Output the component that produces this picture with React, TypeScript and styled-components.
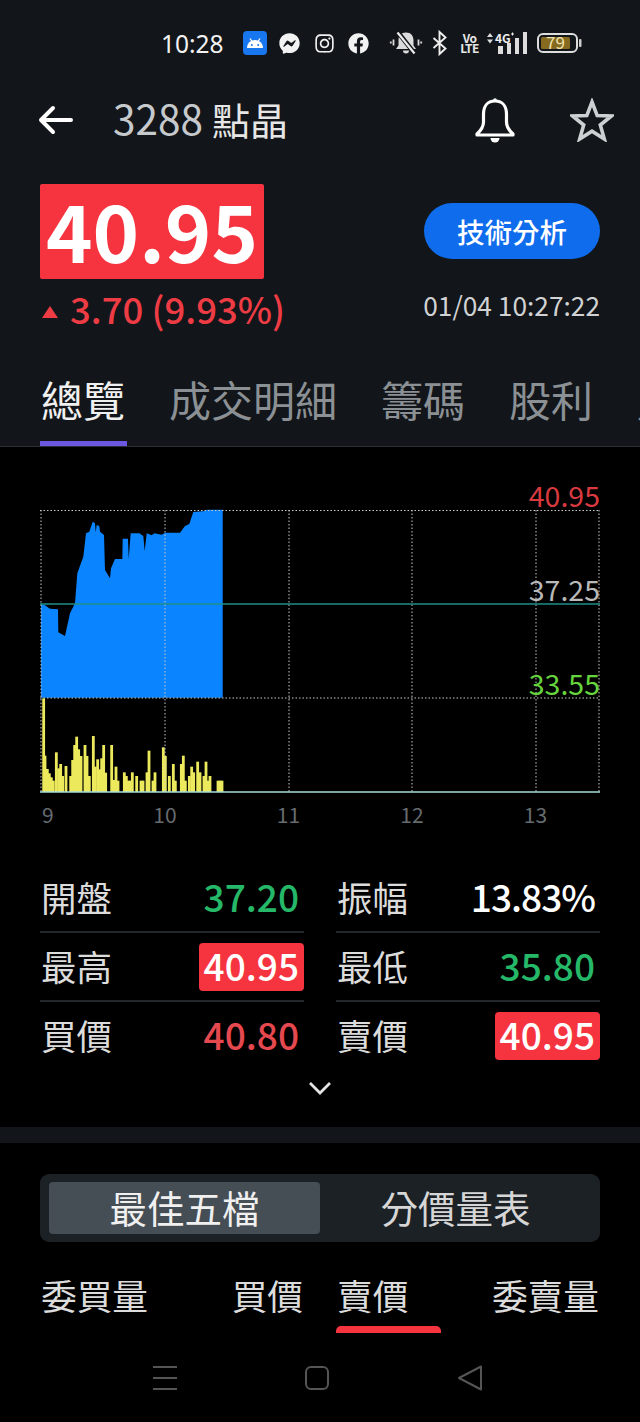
import React from 'react';
import styled, { createGlobalStyle } from 'styled-components';
import { FaFacebook, FaFacebookMessenger, FaInstagram } from 'react-icons/fa';

const FONT = `"Noto Sans CJK TC", "Noto Sans", sans-serif`;

const GlobalStyle = createGlobalStyle`
  html, body {
    margin: 0;
    padding: 0;
    background: #000;
    font-family: ${FONT};
  }
`;

const bluePoints: [number, number][] = [
  [33, 313], [45, 316], [60, 326], [84, 328], [85, 397], [105, 408], [120, 340], [135, 310],
  [142, 220], [160, 170], [168, 100], [178, 95], [188, 65], [195, 70], [197, 97], [200, 75],
  [208, 78], [210, 95], [222, 105], [225, 210], [240, 235], [243, 205], [255, 177], [277, 177],
  [278, 116], [294, 116], [296, 176], [302, 100], [328, 100], [340, 108], [344, 153], [350, 100],
  [365, 106], [373, 100], [395, 104], [405, 98], [450, 98], [465, 78], [478, 72], [490, 36],
  [525, 33], [530, 29], [578, 29], [578, 593], [33, 593],
];

const volumeBars: [number, number][] = [
  [41, 25], [45, 197], [52, 237], [58, 250], [64, 262], [70, 272], [79, 187], [86, 235], [92, 222],
  [98, 258], [108, 228], [122, 258], [128, 210], [134, 165], [140, 140], [146, 178], [153, 198],
  [165, 165], [171, 198], [178, 258], [190, 138], [196, 230], [203, 208], [209, 238], [215, 205],
  [221, 165], [227, 248], [245, 165], [252, 270], [258, 230], [264, 272], [283, 247], [289, 258],
  [295, 272], [301, 272], [307, 247], [320, 258], [333, 272], [339, 272], [351, 247], [357, 182],
  [369, 272], [375, 247], [400, 172], [406, 198], [418, 258], [430, 222], [436, 272], [454, 222],
  [460, 197], [466, 272], [478, 258], [485, 230], [491, 247], [503, 215], [510, 247], [522, 258],
  [528, 215], [534, 272], [540, 258], [564, 272], [570, 272], [576, 272],
];

const toX = (z: number) => 30 + z / 3;
const bluePath = bluePoints.map(([x, y]) => `${toX(x).toFixed(1)},${(500 + y / 3).toFixed(1)}`).join(' ');

const AndroidIcon = () => (
  <svg width="24" height="24" viewBox="0 0 24 24">
    <rect width="24" height="24" rx="4" fill="#1877ee" />
    <path d="M4 17a8 8 0 0 1 16 0z" fill="#fff" />
    <path d="M7 7.500l2 3M17 7.500l-2 3" stroke="#fff" strokeWidth="1.300" />
    <circle cx="8.800" cy="14" r="1" fill="#1877ee" />
    <circle cx="15.200" cy="14" r="1" fill="#1877ee" />
  </svg>
);

const MuteIcon = () => (
  <svg width="32" height="24" viewBox="0 0 32 24">
    <path d="M16 1.500c-5 0-7.500 3.500-7.500 8v5L6 18h20l-2.500-3.500v-5c0-4.500-2.500-8-7.500-8z" fill="#dcdcdc" />
    <path d="M13 19.500a3 3 0 0 0 6 0z" fill="#dcdcdc" />
    <path d="M7 0l18 23" stroke="#121519" strokeWidth="4.500" />
    <path d="M7.500 1.500l17 21" stroke="#ececec" strokeWidth="2.200" />
    <path d="M3.500 8.500v6M0.800 10.500v2M28.500 8.500v6M31.200 10.500v2" stroke="#dcdcdc" strokeWidth="1.800" />
  </svg>
);

const BluetoothIcon = () => (
  <svg width="15" height="24" viewBox="0 0 15 24" fill="none" stroke="#eee" strokeWidth="1.900">
    <path d="M1.500 7l12 10.500L7.500 23V1l6 5.500L1.500 17" />
  </svg>
);

const SignalIcon = () => (
  <svg width="42" height="24" viewBox="0 0 42 24">
    <path d="M1 6l3-4 3 4zM1 8.500l3 4 3-4z" fill="#ddd" />
    <text x="9" y="12" fontSize="12" fontWeight="700" fill="#eee" fontFamily={FONT}>4G</text>
    <path d="M25 3h3M26.500 1.500v3" stroke="#eee" strokeWidth="1" />
    <rect x="12" y="15" width="5" height="8" fill="#ddd" />
    <rect x="21" y="12" width="4" height="11" fill="#ddd" />
    <rect x="29" y="7" width="4" height="16" fill="#ddd" />
    <rect x="37" y="1" width="4" height="22" fill="#ddd" />
  </svg>
);

const BatteryIcon = () => (
  <svg width="45" height="24" viewBox="0 0 45 24">
    <rect x="1" y="3" width="39" height="18" rx="5" fill="none" stroke="#ddd" strokeWidth="2" />
    <rect x="4" y="6" width="29" height="12" rx="1.500" fill="#856a1f" />
    <rect x="42" y="8" width="2.500" height="8" rx="1" fill="#ccc" />
    <text x="18.500" y="18" fontSize="17" textAnchor="middle" fill="#efe2b0" fontFamily={FONT}>79</text>
  </svg>
);

const BackIcon = () => (
  <svg width="36" height="30" viewBox="0 0 36 30" fill="none" stroke="#fff" strokeWidth="4" strokeLinecap="round" strokeLinejoin="round">
    <path d="M33 15H3M15 3L3 15l12 12" />
  </svg>
);

const BellIcon = () => (
  <svg width="42" height="46" viewBox="0 0 42 46" fill="none" stroke="#fff" strokeWidth="3.200" strokeLinejoin="round">
    <path d="M21 4c-8 0-11.500 6-11.500 13v8c0 5-2 8-6.500 12v1h36v-1c-4.500-4-6.500-7-6.500-12v-8C32.500 10 29 4 21 4z" />
    <circle cx="21" cy="3" r="1.800" fill="#fff" stroke="none" />
    <path d="M16.500 41a4.500 4.500 0 0 0 9 0z" fill="#fff" stroke="none" />
  </svg>
);

const StarIcon = () => (
  <svg width="44" height="44" viewBox="0 0 44 44" fill="none" stroke="#ccd0d3" strokeWidth="3.600" strokeLinejoin="miter">
    <path d="M22 4l5.200 13.600L41.500 18 30.300 27l4 14L22 33.200 9.700 41l4-14L2.500 18l14.300-.4z" />
  </svg>
);

const ChevronIcon = () => (
  <svg width="24" height="16" viewBox="0 0 24 16" fill="none" stroke="#e4e4e4" strokeWidth="2.800">
    <path d="M2 3l10 10L22 3" />
  </svg>
);

const MenuIcon = () => (
  <svg width="26" height="26" viewBox="0 0 26 26" stroke="#555" strokeWidth="2">
    <path d="M1 2h24M1 13h24M1 24h24" />
  </svg>
);

const HomeIcon = () => (
  <svg width="26" height="26" viewBox="0 0 26 26" fill="none" stroke="#555" strokeWidth="2">
    <rect x="2" y="2" width="22" height="22" rx="5" />
  </svg>
);

const BackNavIcon = () => (
  <svg width="26" height="26" viewBox="0 0 26 26" fill="none" stroke="#555" strokeWidth="2" strokeLinejoin="round">
    <path d="M24 1.500v23L2 13z" />
  </svg>
);

const Page = styled.div`
  width: 640px;
  height: 1422px;
  background: #000;
  overflow: hidden;
`;

const TopPanel = styled.header`
  background: #121519;
  height: 447px;
`;

const StatusBar = styled.div`
  height: 86px;
  padding-left: 161px;
  display: flex;
  align-items: center;
`;

const StatusTime = styled.span`
  font-size: 24.500px;
  color: #f2f2f2;
  font-family: "Noto Sans", sans-serif;
`;

const StatusSlot = styled.span<{ $ml: number }>`
  display: flex;
  align-items: center;
  margin-left: ${(p) => p.$ml}px;
  color: #f2f2f2;
  svg {
    overflow: visible;
  }
`;

const VoLte = styled.span`
  width: 16px;
  display: flex;
  flex-direction: column;
  align-items: center;
  font-size: 12px;
  line-height: 10px;
  font-weight: 700;
  color: #e6e6e6;
  letter-spacing: -0.500px;
`;

const TitleBar = styled.div`
  height: 68px;
  padding: 0 26px 0 38px;
  display: flex;
  align-items: center;
`;

const StockName = styled.h1`
  margin: 0 0 0 39px;
  padding-bottom: 4px;
  flex: 1;
  font-size: 40.500px;
  font-weight: 400;
  line-height: 64px;
  color: #c6cacd;
  white-space: nowrap;
`;

const NameCjk = styled.span`
  font-size: 38px;
  color: #e6e6e6;
`;

const TitleActions = styled.div`
  display: flex;
  align-items: center;
  gap: 54px;
`;

const QuoteRow = styled.section`
  margin-top: 30px;
  padding: 0 40px;
  display: flex;
  justify-content: space-between;
`;

const QuoteLeft = styled.div`
  display: flex;
  flex-direction: column;
  align-items: flex-start;
`;

const QuoteRight = styled.div`
  padding-top: 19px;
  display: flex;
  flex-direction: column;
  align-items: flex-end;
`;

const PriceBox = styled.div`
  width: 224px;
  height: 95px;
  padding-bottom: 5px;
  box-sizing: border-box;
  background: #f6343f;
  border-radius: 2px;
  display: flex;
  align-items: center;
  justify-content: center;
  font-size: 79px;
  font-weight: 700;
  color: #fff;
  line-height: 90px;
`;

const ChangeRow = styled.div`
  margin-top: 10px;
  height: 44px;
  padding-bottom: 6px;
  box-sizing: border-box;
  display: flex;
  align-items: center;
  color: #ee3c45;
  font-size: 36.500px;
  font-weight: 500;
  white-space: nowrap;
`;

const UpTriangle = styled.span`
  width: 0;
  height: 0;
  margin: 7px 12px 0 2px;
  border-left: 8px solid transparent;
  border-right: 8px solid transparent;
  border-bottom: 12px solid #ee3c45;
`;

const AnalysisButton = styled.button`
  width: 176px;
  height: 56px;
  border: 0;
  border-radius: 28px;
  background: #0f6cec;
  color: #fff;
  font-family: ${FONT};
  font-size: 27.500px;
  font-weight: 500;
  padding: 0;
`;

const Timestamp = styled.div`
  margin-top: 27px;
  height: 38px;
  line-height: 38px;
  font-size: 26.300px;
  color: #d0d2d4;
  white-space: nowrap;
`;

const TabBar = styled.nav`
  margin-top: 24px;
  height: 90px;
  box-sizing: border-box;
  border-bottom: 1px solid #2c2f33;
  padding-left: 39px;
  display: flex;
  gap: 40px;
  overflow: hidden;
`;

const Tab = styled.div<{ $active?: boolean }>`
  position: relative;
  flex: none;
  height: 90px;
  padding: 12px 2px 0;
  box-sizing: border-box;
  font-size: 42px;
  line-height: 60px;
  color: ${(p) => (p.$active ? '#f0f0f0' : '#8b9094')};
  &::after {
    content: '';
    display: ${(p) => (p.$active ? 'block' : 'none')};
    position: absolute;
    left: 1px;
    right: 0;
    bottom: 0;
    height: 6px;
    background: #6a58e0;
  }
`;

const ChartFrame = styled.section`
  position: relative;
  margin: 62px 40px 0;
  height: 285px;
  svg {
    display: block;
  }
`;

const ChartLabel = styled.span<{ $top: number; $color: string }>`
  position: absolute;
  right: 0;
  top: ${(p) => p.$top}px;
  font-size: 28.500px;
  line-height: 30px;
  color: ${(p) => p.$color};
`;

const AxisRow = styled.div`
  margin-left: 42px;
  height: 44px;
  padding-bottom: 4px;
  box-sizing: border-box;
  display: flex;
  gap: 63.500px;
  align-items: center;
`;

const AxisTick = styled.span<{ $first?: boolean }>`
  width: ${(p) => (p.$first ? 29.500 : 60)}px;
  text-align: ${(p) => (p.$first ? 'left' : 'center')};
  font-size: 21px;
  color: #666b6f;
`;

const StatsGrid = styled.section`
  margin-top: 26px;
  padding: 0 40px;
  display: grid;
  grid-template-columns: 264px 264px;
  column-gap: 32px;
`;

const StatRow = styled.div<{ $last?: boolean }>`
  height: 69px;
  box-sizing: border-box;
  display: flex;
  align-items: center;
  justify-content: space-between;
  border-bottom: 2px solid ${(p) => (p.$last ? 'transparent' : '#24272b')};
`;

const StatLabel = styled.span`
  padding: 0 0 3px 1px;
  font-size: 35.500px;
  color: #dcdcdc;
`;

const StatValue = styled.span<{ $color?: string; $flag?: boolean; $tight?: boolean }>`
  height: 48px;
  padding: 0 5px 3px;
  box-sizing: border-box;
  display: flex;
  align-items: center;
  border-radius: 4px;
  font-size: 37px;
  font-weight: 500;
  letter-spacing: ${(p) => (p.$tight ? '-1px' : '0')};
  color: ${(p) => p.$color || '#fff'};
  background: ${(p) => (p.$flag ? '#f6343f' : 'transparent')};
`;

const ExpandRow = styled.div`
  height: 56px;
  padding-top: 9px;
  box-sizing: border-box;
  display: flex;
  justify-content: center;
  align-items: flex-start;
`;

const Band = styled.div`
  height: 16px;
  background: #121519;
`;

const Segmented = styled.div`
  margin: 31px 40px 0;
  height: 68px;
  padding: 8px 9px;
  box-sizing: border-box;
  display: flex;
  background: #1c2126;
  border-radius: 9px;
`;

const Segment = styled.div<{ $active?: boolean }>`
  flex: 1;
  padding-bottom: 3px;
  display: flex;
  align-items: center;
  justify-content: center;
  border-radius: 4px;
  font-size: 37.500px;
  color: ${(p) => (p.$active ? '#f0f0f0' : '#d6d6d6')};
  background: ${(p) => (p.$active ? '#454e55' : 'transparent')};
`;

const DepthHeader = styled.div`
  margin-top: 26px;
  padding: 0 40px;
  display: grid;
  grid-template-columns: 264px 264px;
  column-gap: 32px;
`;

const DepthSide = styled.div`
  height: 58px;
  padding-bottom: 6px;
  box-sizing: border-box;
  display: flex;
  align-items: center;
  justify-content: space-between;
`;

const DepthLabel = styled.span`
  padding: 0 1px;
  font-size: 35.700px;
  color: #dcdcdc;
`;

const SellMarker = styled.div`
  grid-column: 2;
  width: 105px;
  height: 7px;
  background: #f6343f;
  border-radius: 5px 5px 0 0;
`;

const NavBar = styled.footer`
  margin-top: 32px;
  display: flex;
  justify-content: center;
  gap: 126.500px;
  padding-right: 6px;
  svg {
    display: block;
  }
`;

const App: React.FC = () => {
  const gridX = [41, 165, 289, 412, 536, 599];
  return (
    <Page>
      <GlobalStyle />
      <TopPanel>
        <StatusBar>
          <StatusTime>10:28</StatusTime>
          <StatusSlot $ml={19}><AndroidIcon /></StatusSlot>
          <StatusSlot $ml={12}><FaFacebookMessenger size={21} /></StatusSlot>
          <StatusSlot $ml={14}><FaInstagram size={21} /></StatusSlot>
          <StatusSlot $ml={13}><FaFacebook size={21} /></StatusSlot>
          <StatusSlot $ml={21}><MuteIcon /></StatusSlot>
          <StatusSlot $ml={10}><BluetoothIcon /></StatusSlot>
          <StatusSlot $ml={15}><VoLte><span>Vo</span><span>LTE</span></VoLte></StatusSlot>
          <StatusSlot $ml={8}><SignalIcon /></StatusSlot>
          <StatusSlot $ml={9}><BatteryIcon /></StatusSlot>
        </StatusBar>
        <TitleBar>
          <BackIcon />
          <StockName>3288 <NameCjk>點晶</NameCjk></StockName>
          <TitleActions>
            <BellIcon />
            <StarIcon />
          </TitleActions>
        </TitleBar>
        <QuoteRow>
          <QuoteLeft>
            <PriceBox>40.95</PriceBox>
            <ChangeRow><UpTriangle />3.70 (9.93%)</ChangeRow>
          </QuoteLeft>
          <QuoteRight>
            <AnalysisButton>技術分析</AnalysisButton>
            <Timestamp>01/04 10:27:22</Timestamp>
          </QuoteRight>
        </QuoteRow>
        <TabBar>
          <Tab $active>總覽</Tab>
          <Tab>成交明細</Tab>
          <Tab>籌碼</Tab>
          <Tab>股利</Tab>
          <Tab>財務</Tab>
        </TabBar>
      </TopPanel>

      <ChartFrame>
        <svg width="560" height="285" viewBox="40 509 560 285">
          <polygon points={bluePath} fill="#0a84ff" />
          {volumeBars.map(([x, top]) => (
            <rect key={x} x={toX(x) - 1.4} y={690 + top / 3} width={2.8} height={792 - (690 + top / 3)} fill="#ecea5c" />
          ))}
          {gridX.map((x) => (
            <line key={x} x1={x} x2={x} y1={510} y2={792} stroke="#c8c8c8" strokeWidth="1" strokeDasharray="1.500 2" />
          ))}
          <line x1="40" x2="600" y1="510.500" y2="510.500" stroke="#c8c8c8" strokeDasharray="1.500 2" />
          <line x1="40" x2="600" y1="698" y2="698" stroke="#c8c8c8" strokeDasharray="1.500 2" />
          <line x1="40" x2="600" y1="604" y2="604" stroke="#1f8f88" strokeWidth="1.500" />
          <line x1="40" x2="600" y1="792" y2="792" stroke="#a9dcdc" strokeWidth="1.500" />
        </svg>
        <ChartLabel $top={-29} $color="#d83a3f">40.95</ChartLabel>
        <ChartLabel $top={65} $color="#b9b9b9">37.25</ChartLabel>
        <ChartLabel $top={159} $color="#66d43c">33.55</ChartLabel>
      </ChartFrame>
      <AxisRow>
        <AxisTick $first>9</AxisTick>
        <AxisTick>10</AxisTick>
        <AxisTick>11</AxisTick>
        <AxisTick>12</AxisTick>
        <AxisTick>13</AxisTick>
      </AxisRow>

      <StatsGrid>
        <StatRow><StatLabel>開盤</StatLabel><StatValue $color="#25b868">37.20</StatValue></StatRow>
        <StatRow><StatLabel>振幅</StatLabel><StatValue $tight>13.83%</StatValue></StatRow>
        <StatRow><StatLabel>最高</StatLabel><StatValue $flag>40.95</StatValue></StatRow>
        <StatRow><StatLabel>最低</StatLabel><StatValue $color="#25b868">35.80</StatValue></StatRow>
        <StatRow $last><StatLabel>買價</StatLabel><StatValue $color="#e6484f">40.80</StatValue></StatRow>
        <StatRow $last><StatLabel>賣價</StatLabel><StatValue $flag>40.95</StatValue></StatRow>
      </StatsGrid>
      <ExpandRow><ChevronIcon /></ExpandRow>
      <Band />

      <Segmented>
        <Segment $active>最佳五檔</Segment>
        <Segment>分價量表</Segment>
      </Segmented>
      <DepthHeader>
        <DepthSide><DepthLabel>委買量</DepthLabel><DepthLabel>買價</DepthLabel></DepthSide>
        <DepthSide><DepthLabel>賣價</DepthLabel><DepthLabel>委賣量</DepthLabel></DepthSide>
        <SellMarker />
      </DepthHeader>
      <NavBar>
        <MenuIcon />
        <HomeIcon />
        <BackNavIcon />
      </NavBar>
    </Page>
  );
};

export default App;
